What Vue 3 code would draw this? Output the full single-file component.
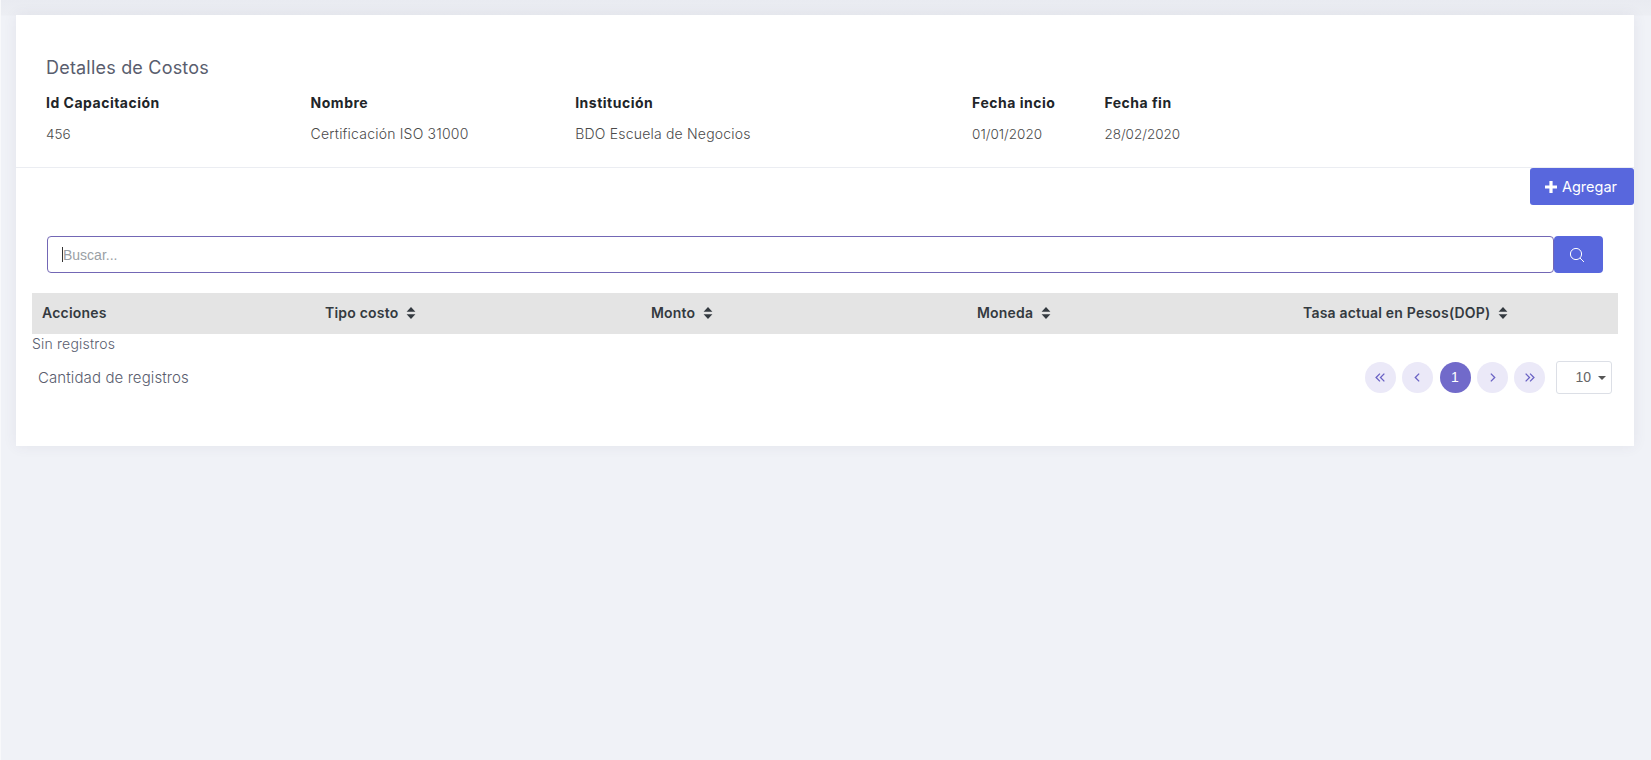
<script setup>
const info = [
  { label: 'Id Capacitación', value: '456', span: 2, tight: true },
  { label: 'Nombre', value: 'Certificación ISO 31000', span: 2 },
  { label: 'Institución', value: 'BDO Escuela de Negocios', span: 3 },
  { label: 'Fecha incio', value: '01/01/2020', span: 1, tight: true },
  { label: 'Fecha fin', value: '28/02/2020', span: 1, tight: true },
]
const cols = ['Tipo costo', 'Monto', 'Moneda', 'Tasa actual en Pesos(DOP)']
</script>

<template>
  <div class="page">
    <main class="card">
      <section class="details">
        <h3 class="title">Detalles de Costos</h3>
        <div class="info">
          <div v-for="i in info" :key="i.label" class="info-col" :class="'s' + i.span">
            <strong>{{ i.label }}</strong>
            <span :class="{ tight: i.tight }">{{ i.value }}</span>
          </div>
        </div>
      </section>
      <div class="actions">
        <button class="add">
          <svg class="plus" viewBox="0 0 12 12"><path d="M4.4 0h3.2v4.4H12v3.2H7.6V12H4.4V7.6H0V4.4h4.4z" fill="#fff"/></svg>
          Agregar
        </button>
      </div>
      <div class="search">
        <div class="input"><i class="caret"></i><span>Buscar...</span></div>
        <button class="go">
          <svg viewBox="0 0 16 16" width="16" height="16" fill="none" stroke="#fff" stroke-width="1"><circle cx="7" cy="7" r="5.6"/><path d="M11 11l4 4"/></svg>
        </button>
      </div>
      <div class="thead">
        <div class="th">Acciones</div>
        <div v-for="c in cols" :key="c" class="th">
          {{ c }}
          <svg class="sort" viewBox="0 0 10 12"><path d="M5 0l4.4 4.8H.6zM5 12L.6 7.2h8.8z" fill="#343a40"/></svg>
        </div>
      </div>
      <div class="empty">Sin registros</div>
      <div class="footer">
        <span class="count">Cantidad de registros</span>
        <nav class="pager">
          <span class="pg">
            <svg viewBox="0 0 10 10"><path d="M4.5 1.5L1 5l3.5 3.5M8.5 1.5L5 5l3.5 3.5"/></svg>
          </span>
          <span class="pg">
            <svg viewBox="0 0 10 10"><path d="M6.5 1.5L3 5l3.5 3.5"/></svg>
          </span>
          <span class="pg active">1</span>
          <span class="pg">
            <svg viewBox="0 0 10 10"><path d="M3.5 1.5L7 5 3.5 8.5"/></svg>
          </span>
          <span class="pg">
            <svg viewBox="0 0 10 10"><path d="M1.5 1.5L5 5 1.5 8.5M5.5 1.5L9 5 5.5 8.5"/></svg>
          </span>
          <span class="size">10<i class="tri"></i></span>
        </nav>
      </div>
    </main>
  </div>
</template>

<style>
html, body { margin: 0; background: #f0f2f7; }
</style>

<style scoped>
.page {
  height: 760px;
  box-sizing: border-box;
  padding: 15px 17px 0 15px;
  background: linear-gradient(#e9ebf1 0, #eceef3 15px, #f0f2f7 16px);
  border-left: 1px solid #f8f9fb;
  font-family: Inter, "Open Sans", sans-serif;
  color: #595d6e;
  overflow: hidden;
}
.card {
  height: 431px;
  box-sizing: border-box;
  background: #fff;
  box-shadow: 0 0 13px rgba(82, 63, 105, 0.08);
  display: flex;
  flex-direction: column;
}
.details {
  height: 153px;
  box-sizing: border-box;
  padding: 42px 0 0 30px;
  border-bottom: 1px solid #ebedf2;
}
.title {
  margin: 0;
  font-size: 18px;
  letter-spacing: 0.2px;
  line-height: 21px;
  font-weight: 400;
  color: #595d6e;
}
.info {
  display: grid;
  grid-template-columns: repeat(12, 132.3px);
  margin-top: 15px;
}
.info-col { display: flex; flex-direction: column; font-size: 14px; }
.s1 { grid-column: span 1; }
.s2 { grid-column: span 2; }
.s3 { grid-column: span 3; }
.info-col strong {
  font-weight: 700;
  line-height: 20px;
  letter-spacing: 0.5px;
  color: #212529;
}
.info-col span {
  margin-top: 11px;
  line-height: 20px;
  font-weight: 300;
  letter-spacing: 0.2px;
  color: #4a4a4a;
}
.info-col span.tight { font-size: 13.5px; letter-spacing: 0; }
.actions { display: flex; justify-content: flex-end; }
.add {
  width: 104px;
  height: 37px;
  border: 0;
  border-radius: 3px;
  background: #5867dd;
  color: #fff;
  font: 400 14.5px Inter, sans-serif;
  display: flex;
  align-items: center;
  justify-content: center;
  gap: 5px;
  padding: 0 2px 0 0;
}
.plus { width: 12px; height: 12px; }
.search {
  display: flex;
  margin: 31px 31px 0 31px;
  height: 37px;
}
.input {
  flex: 1;
  box-sizing: border-box;
  border: 1px solid #7367b5;
  border-radius: 4px;
  display: flex;
  align-items: center;
  padding-left: 14px;
  font: 400 14px "Liberation Sans", Arial, sans-serif;
  color: #9a9fa5;
}
.caret { width: 1px; height: 15px; background: #333; }
.go {
  width: 49px;
  border: 0;
  padding: 0 4px 0 0;
  border-radius: 4px;
  background: #5867dd;
  display: flex;
  align-items: center;
  justify-content: center;
}
.thead {
  margin: 20px 16px 0 16px;
  height: 41px;
  background: #e4e4e4;
  display: grid;
  grid-template-columns: 283px 326px 326px 326px 1fr;
}
.th {
  padding: 0 0 2px 10px;
  display: flex;
  align-items: center;
  gap: 8px;
  font-size: 14px;
  letter-spacing: 0.2px;
  font-weight: 600;
  color: #343a40;
}
.sort { width: 10px; height: 12px; }
.empty {
  margin-left: 16px;
  font-size: 14px;
  letter-spacing: 0.2px;
  font-weight: 300;
  line-height: 20px;
  color: #595d6e;
}
.footer {
  display: flex;
  justify-content: space-between;
  align-items: center;
  margin: 5px 22px 0 22px;
  height: 36px;
}
.count { font-size: 15px; letter-spacing: 0.1px; font-weight: 300; color: #595d6e; }
.pager { display: flex; align-items: center; gap: 6.25px; }
.pg {
  width: 31px;
  height: 31px;
  border-radius: 50%;
  background: #ebe9f8;
  display: flex;
  align-items: center;
  justify-content: center;
  font: 400 14px "Liberation Sans", Arial, sans-serif;
}
.pg svg { width: 11px; height: 11px; fill: none; stroke: #6a62c4; stroke-width: 1.2; }
.pg.active { background: #716aca; color: #fff; }
.size {
  box-sizing: border-box;
  width: 56px;
  height: 33px;
  margin-left: 4.75px;
  border: 1px solid #dcdfe6;
  border-radius: 3px;
  display: flex;
  align-items: center;
  justify-content: flex-end;
  gap: 7px;
  padding-right: 5px;
  font: 400 14px "Liberation Sans", Arial, sans-serif;
  color: #666;
}
.tri {
  margin-top: 2px;
  border: 4px solid transparent;
  border-top: 4px solid #555;
  border-bottom: 0;
  width: 0;
  height: 0;
}
</style>
